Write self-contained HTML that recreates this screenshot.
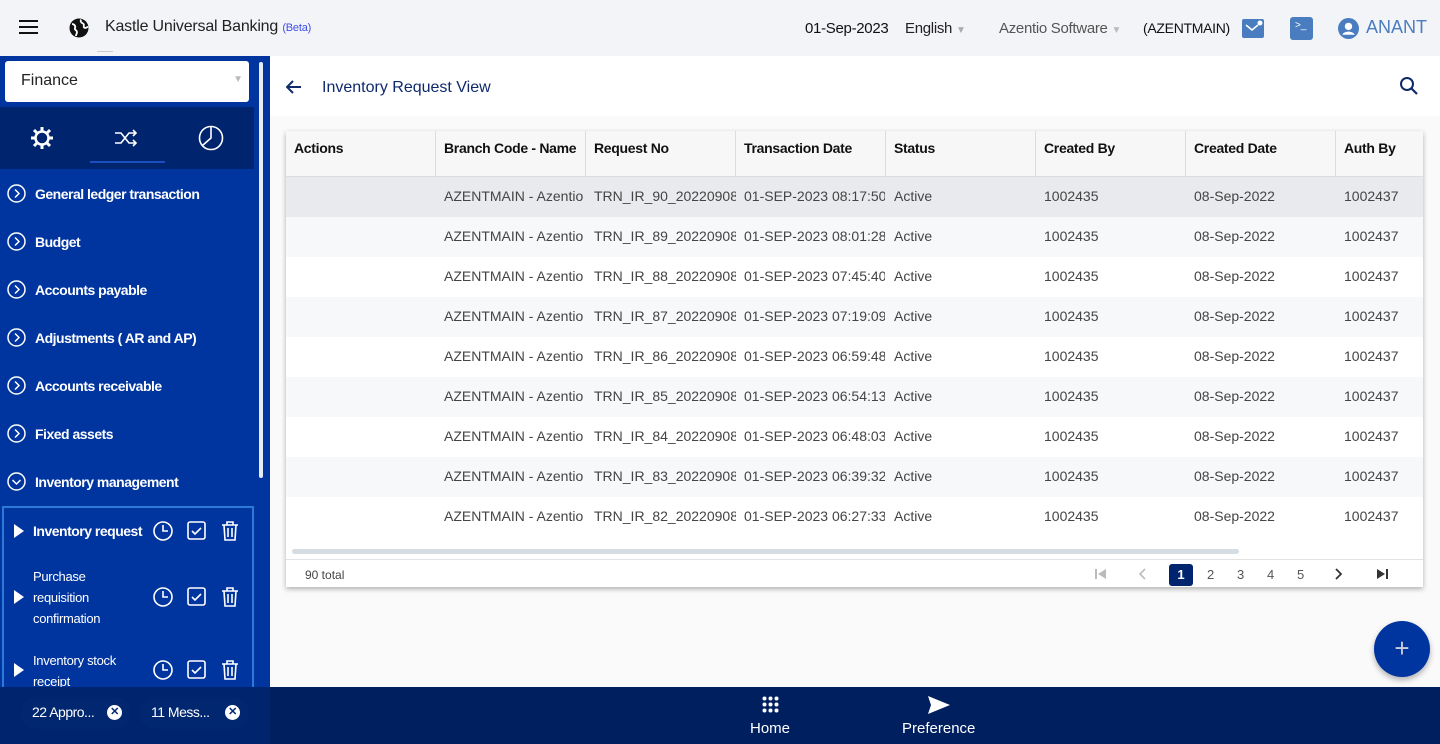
<!DOCTYPE html>
<html><head><meta charset="utf-8"><style>
*{box-sizing:border-box;margin:0;padding:0}
body{width:1440px;height:744px;overflow:hidden;font-family:"Liberation Sans",sans-serif;background:#fafafa;position:relative}
.top{position:absolute;left:0;top:0;width:1440px;height:56px;background:#f3f4f8}
.abs{position:absolute;white-space:nowrap}
.side{position:absolute;left:0;top:56px;width:270px;height:688px;background:#0035a0}
.menu{position:absolute;left:7px;width:240px;height:20px;color:#fff;font-size:14px;font-weight:bold;letter-spacing:-0.5px;white-space:nowrap}
.menu svg{position:absolute;left:0;top:-2px}
.menu span{position:absolute;left:28px;top:0}
.card{position:absolute;left:286px;top:131px;width:1137px;height:456px;background:#fff;box-shadow:0 2px 5px rgba(0,0,0,.3);overflow:hidden}
.th{position:absolute;top:0;height:46px;background:#f7f7f8;border-right:1px solid #ddd;border-bottom:1px solid #ddd;font-size:14px;font-weight:bold;color:#111;padding:9px 8px;letter-spacing:-0.3px}
.row{position:absolute;left:0;width:1137px;height:40px;font-size:14px;color:#444}
.row div{position:absolute;top:11px;overflow:hidden;white-space:nowrap}
.bottom{position:absolute;left:270px;top:687px;width:1170px;height:57px;background:#001f5f}
.chip{position:absolute;top:697px;height:32px;border-radius:16px;background:#00276f;color:#fff;font-size:14px;padding:7px 12px;letter-spacing:-0.5px}
.x{position:absolute;top:8px;width:15px;height:15px;border-radius:50%;background:#fff;color:#00276f;font-size:11px;text-align:center;line-height:15px;font-weight:bold}
.pg{position:absolute;top:433px;font-size:13px;color:#555}
</style></head><body>
<div class="top"></div>
<div class="abs" style="left:19px;top:20px;width:19px;height:2px;background:#111;box-shadow:0 6px #111,0 12px #111"></div>
<svg class="abs" style="left:69px;top:18px" width="20" height="20" viewBox="0 0 20 20"><circle cx="10" cy="10" r="9.5" fill="#111"/><path d="M3 6c2 0 4 2 3 4s2 2 2 4-1 2-1 4M12 1.5c-1 2 0 3 2 4s0 3 1 4 3 0 4-1" stroke="#fff" stroke-width="1.8" fill="none"/></svg>
<div class="abs" style="left:105px;top:18px;font-size:16px;color:#222;letter-spacing:-0.2px">Kastle Universal Banking <span style="font-size:11px;color:#3d4ee6">(Beta)</span></div>
<div class="abs" style="left:97px;top:51px;width:16px;height:1px;background:#ccc"></div>
<div class="abs" style="left:805px;top:20px;font-size:15px;color:#111;letter-spacing:-0.3px">01-Sep-2023</div>
<div class="abs" style="left:905px;top:20px;font-size:15px;color:#222;letter-spacing:-0.3px">English <span style="color:#aaa;font-size:10px">▼</span></div>
<div class="abs" style="left:999px;top:20px;font-size:15px;color:#555;letter-spacing:-0.3px">Azentio Software <span style="color:#bbb;font-size:10px">▼</span></div>
<div class="abs" style="left:1143px;top:20px;font-size:14px;color:#111;letter-spacing:-0.3px">(AZENTMAIN)</div>
<div class="abs" style="left:1242px;top:19px;width:22px;height:19px;background:#4a7dbf;border-radius:2px"><svg width="22" height="19"><path d="M4 6l6 5 6-5" stroke="#fff" stroke-width="1.5" fill="none"/><circle cx="18" cy="4" r="2.5" fill="#fff"/></svg></div>
<div class="abs" style="left:1290px;top:17px;width:23px;height:23px;background:#4a7dbf;border-radius:3px;color:#fff;font-size:10px;padding:3px 5px">&gt;_</div>
<svg class="abs" style="left:1338px;top:18px" width="21" height="21" viewBox="0 0 20 20"><circle cx="10" cy="10" r="10" fill="#4a7dbf"/><circle cx="10" cy="8" r="3.5" fill="#fff"/><path d="M4 16c2-4 10-4 12 0" fill="#fff"/></svg>
<div class="abs" style="left:1366px;top:17px;font-size:18px;color:#4a7dbf">ANANT</div>

<div class="side"></div>
<div class="abs" style="left:259px;top:62px;width:4px;height:416px;background:#fff;border-radius:2px;opacity:.9"></div>
<div class="abs" style="left:5px;top:61px;width:244px;height:41px;background:#fff;border-radius:3px;font-size:16px;color:#222;padding:11px 16px">Finance<span style="position:absolute;right:6px;top:13px;color:#bbb;font-size:10px">▼</span></div>
<div class="abs" style="left:0;top:107px;width:254px;height:62px;background:#00256e"></div>
<svg class="abs" style="left:30px;top:126px" width="24" height="24" viewBox="0 0 24 24"><circle cx="12" cy="12" r="6.5" stroke="#fff" stroke-width="2.5" fill="none"/><path d="M12 1v5M12 18v5M1 12h5M18 12h5M4 4l3.5 3.5M16.5 16.5L20 20M4 20l3.5-3.5M16.5 7.5L20 4" stroke="#fff" stroke-width="3"/></svg>
<svg class="abs" style="left:114px;top:128px" width="25" height="20" viewBox="0 0 25 20"><path d="M1 5h6l8 10h7M1 15h6l8-10h7M19 2l3 3-3 3M19 12l3 3-3 3" stroke="#fff" stroke-width="1.6" fill="none"/></svg>
<div class="abs" style="left:90px;top:161px;width:75px;height:2px;background:#1a4fc0"></div>
<svg class="abs" style="left:198px;top:125px" width="26" height="26" viewBox="0 0 26 26"><circle cx="13" cy="13" r="11.5" stroke="#fff" stroke-width="1.6" fill="none"/><path d="M13 1.5V13L4.5 20.5" stroke="#fff" stroke-width="1.6" fill="none"/></svg>

<div class="menu" style="top:186px"><svg width="19" height="19"><circle cx="9.5" cy="9.5" r="8.5" stroke="#fff" stroke-width="1.5" fill="none"/><path d="M8 5.5l4 4-4 4" stroke="#fff" stroke-width="1.5" fill="none"/></svg><span>General ledger transaction</span></div>
<div class="menu" style="top:234px"><svg width="19" height="19"><circle cx="9.5" cy="9.5" r="8.5" stroke="#fff" stroke-width="1.5" fill="none"/><path d="M8 5.5l4 4-4 4" stroke="#fff" stroke-width="1.5" fill="none"/></svg><span>Budget</span></div>
<div class="menu" style="top:282px"><svg width="19" height="19"><circle cx="9.5" cy="9.5" r="8.5" stroke="#fff" stroke-width="1.5" fill="none"/><path d="M8 5.5l4 4-4 4" stroke="#fff" stroke-width="1.5" fill="none"/></svg><span>Accounts payable</span></div>
<div class="menu" style="top:330px"><svg width="19" height="19"><circle cx="9.5" cy="9.5" r="8.5" stroke="#fff" stroke-width="1.5" fill="none"/><path d="M8 5.5l4 4-4 4" stroke="#fff" stroke-width="1.5" fill="none"/></svg><span>Adjustments ( AR and AP)</span></div>
<div class="menu" style="top:378px"><svg width="19" height="19"><circle cx="9.5" cy="9.5" r="8.5" stroke="#fff" stroke-width="1.5" fill="none"/><path d="M8 5.5l4 4-4 4" stroke="#fff" stroke-width="1.5" fill="none"/></svg><span>Accounts receivable</span></div>
<div class="menu" style="top:426px"><svg width="19" height="19"><circle cx="9.5" cy="9.5" r="8.5" stroke="#fff" stroke-width="1.5" fill="none"/><path d="M8 5.5l4 4-4 4" stroke="#fff" stroke-width="1.5" fill="none"/></svg><span>Fixed assets</span></div>
<div class="menu" style="top:474px"><svg width="19" height="19"><circle cx="9.5" cy="9.5" r="8.5" stroke="#fff" stroke-width="1.5" fill="none"/><path d="M5.5 8l4 4 4-4" stroke="#fff" stroke-width="1.5" fill="none"/></svg><span>Inventory management</span></div>

<div class="abs" style="left:2px;top:506px;width:252px;height:190px;border:2px solid #2b7ad8;border-bottom:none"></div>
<div class="abs" style="left:14px;top:524px;border-left:10px solid #fff;border-top:7px solid transparent;border-bottom:7px solid transparent"></div>
<div class="abs" style="left:33px;top:523px;color:#fff;font-size:14px;font-weight:bold;letter-spacing:-0.5px">Inventory request</div>
<div class="abs" style="left:14px;top:590px;border-left:10px solid #fff;border-top:7px solid transparent;border-bottom:7px solid transparent"></div>
<div class="abs" style="left:33px;top:566px;color:#fff;font-size:13px;line-height:21px;letter-spacing:-0.3px;white-space:normal">Purchase<br>requisition<br>confirmation</div>
<div class="abs" style="left:14px;top:663px;border-left:10px solid #fff;border-top:7px solid transparent;border-bottom:7px solid transparent"></div>
<div class="abs" style="left:33px;top:650px;color:#fff;font-size:13px;line-height:21px;letter-spacing:-0.3px">Inventory stock<br>receipt</div>
<svg class="abs" style="left:152px;top:520px" width="90" height="170">
<g id="ic" stroke="#fff" stroke-width="1.6" fill="none">
<circle cx="11" cy="11" r="9"/><path d="M11 5v6h5"/>
<rect x="36" y="2" width="17" height="17" rx="2"/><path d="M40 11l3 3 6-6"/>
<path d="M70 5h16M75 5V2h6v3M72 5l1 15h10l1-15M76 8v9M80 8v9"/>
</g>
<use href="#ic" y="66"/><use href="#ic" y="139"/>
</svg>
<div class="abs" style="left:0;top:687px;width:270px;height:57px;background:#00256e"></div>
<div class="chip" style="left:20px;width:111px">22 Appro...<div class="x" style="left:87px">✕</div></div>
<div class="chip" style="left:139px;width:110px">11 Mess...<div class="x" style="left:86px">✕</div></div>

<div class="abs" style="left:270px;top:56px;width:1170px;height:60px;background:#fff"></div>
<svg class="abs" style="left:286px;top:80px" width="16" height="14"><path d="M15 7H2M7 1L1 7l6 6" stroke="#0f2a6b" stroke-width="2" fill="none"/></svg>
<div class="abs" style="left:322px;top:79px;font-size:16px;color:#0f2a6b">Inventory Request View</div>
<svg class="abs" style="left:1399px;top:76px" width="20" height="20"><circle cx="8" cy="8" r="6" stroke="#0f2a6b" stroke-width="2" fill="none"/><path d="M12.5 12.5L18 18" stroke="#0f2a6b" stroke-width="2.2"/></svg>

<div class="card">
<div class="th" style="left:0;width:150px">Actions</div>
<div class="th" style="left:150px;width:150px">Branch Code - Name</div>
<div class="th" style="left:300px;width:150px">Request No</div>
<div class="th" style="left:450px;width:150px">Transaction Date</div>
<div class="th" style="left:600px;width:150px">Status</div>
<div class="th" style="left:750px;width:150px">Created By</div>
<div class="th" style="left:900px;width:150px">Created Date</div>
<div class="th" style="left:1050px;width:150px">Auth By</div>
<div class="row" style="top:46px;background:#e8eaed"><div style="left:158px;width:141px">AZENTMAIN - Azentio Main</div><div style="left:308px;width:142px">TRN_IR_90_20220908123</div><div style="left:458px;width:141px">01-SEP-2023 08:17:50</div><div style="left:608px">Active</div><div style="left:758px">1002435</div><div style="left:908px">08-Sep-2022</div><div style="left:1058px">1002437</div></div>
<div class="row" style="top:86px;background:#f7f8fa"><div style="left:158px;width:141px">AZENTMAIN - Azentio Main</div><div style="left:308px;width:142px">TRN_IR_89_20220908123</div><div style="left:458px;width:141px">01-SEP-2023 08:01:28</div><div style="left:608px">Active</div><div style="left:758px">1002435</div><div style="left:908px">08-Sep-2022</div><div style="left:1058px">1002437</div></div>
<div class="row" style="top:126px;background:#fff"><div style="left:158px;width:141px">AZENTMAIN - Azentio Main</div><div style="left:308px;width:142px">TRN_IR_88_20220908123</div><div style="left:458px;width:141px">01-SEP-2023 07:45:40</div><div style="left:608px">Active</div><div style="left:758px">1002435</div><div style="left:908px">08-Sep-2022</div><div style="left:1058px">1002437</div></div>
<div class="row" style="top:166px;background:#f7f8fa"><div style="left:158px;width:141px">AZENTMAIN - Azentio Main</div><div style="left:308px;width:142px">TRN_IR_87_20220908123</div><div style="left:458px;width:141px">01-SEP-2023 07:19:09</div><div style="left:608px">Active</div><div style="left:758px">1002435</div><div style="left:908px">08-Sep-2022</div><div style="left:1058px">1002437</div></div>
<div class="row" style="top:206px;background:#fff"><div style="left:158px;width:141px">AZENTMAIN - Azentio Main</div><div style="left:308px;width:142px">TRN_IR_86_20220908123</div><div style="left:458px;width:141px">01-SEP-2023 06:59:48</div><div style="left:608px">Active</div><div style="left:758px">1002435</div><div style="left:908px">08-Sep-2022</div><div style="left:1058px">1002437</div></div>
<div class="row" style="top:246px;background:#f7f8fa"><div style="left:158px;width:141px">AZENTMAIN - Azentio Main</div><div style="left:308px;width:142px">TRN_IR_85_20220908123</div><div style="left:458px;width:141px">01-SEP-2023 06:54:13</div><div style="left:608px">Active</div><div style="left:758px">1002435</div><div style="left:908px">08-Sep-2022</div><div style="left:1058px">1002437</div></div>
<div class="row" style="top:286px;background:#fff"><div style="left:158px;width:141px">AZENTMAIN - Azentio Main</div><div style="left:308px;width:142px">TRN_IR_84_20220908123</div><div style="left:458px;width:141px">01-SEP-2023 06:48:03</div><div style="left:608px">Active</div><div style="left:758px">1002435</div><div style="left:908px">08-Sep-2022</div><div style="left:1058px">1002437</div></div>
<div class="row" style="top:326px;background:#f7f8fa"><div style="left:158px;width:141px">AZENTMAIN - Azentio Main</div><div style="left:308px;width:142px">TRN_IR_83_20220908123</div><div style="left:458px;width:141px">01-SEP-2023 06:39:32</div><div style="left:608px">Active</div><div style="left:758px">1002435</div><div style="left:908px">08-Sep-2022</div><div style="left:1058px">1002437</div></div>
<div class="row" style="top:366px;background:#fff"><div style="left:158px;width:141px">AZENTMAIN - Azentio Main</div><div style="left:308px;width:142px">TRN_IR_82_20220908123</div><div style="left:458px;width:141px">01-SEP-2023 06:27:33</div><div style="left:608px">Active</div><div style="left:758px">1002435</div><div style="left:908px">08-Sep-2022</div><div style="left:1058px">1002437</div></div>
<div class="abs" style="left:6px;top:418px;width:947px;height:5px;background:#d5dde2;border-radius:3px"></div>
<div class="abs" style="left:0;top:428px;width:1137px;height:1px;background:#e2e2e2"></div>
<div class="pg" style="left:19px;top:437px;font-size:12px;color:#444">90 total</div>
<svg class="abs" style="left:809px;top:437px" width="12" height="12"><path d="M1 1v10" stroke="#bbb" stroke-width="2"/><path d="M11 1L3 6l8 5z" fill="#bbb"/></svg>
<svg class="abs" style="left:853px;top:437px" width="8" height="12"><path d="M6 1L1 6l5 5" stroke="#bbb" stroke-width="1.6" fill="none"/></svg>
<div class="abs" style="left:883px;top:433px;width:24px;height:22px;background:#00256e;border-radius:3px;color:#fff;font-size:13px;font-weight:bold;text-align:center;line-height:22px">1</div>
<div class="pg" style="left:921px;top:436px">2</div>
<div class="pg" style="left:951px;top:436px">3</div>
<div class="pg" style="left:981px;top:436px">4</div>
<div class="pg" style="left:1011px;top:436px">5</div>
<svg class="abs" style="left:1048px;top:437px" width="8" height="12"><path d="M2 1l5 5-5 5" stroke="#333" stroke-width="1.8" fill="none"/></svg>
<svg class="abs" style="left:1090px;top:437px" width="12" height="12"><path d="M1 1l8 5-8 5z" fill="#333"/><path d="M11 1v10" stroke="#333" stroke-width="2"/></svg>
</div>

<div class="abs" style="left:1374px;top:621px;width:56px;height:56px;border-radius:50%;background:#0035a0;box-shadow:0 3px 6px rgba(0,0,0,.3);color:#ccd;font-size:26px;text-align:center;line-height:54px;font-weight:300">+</div>

<div class="bottom"></div>
<svg class="abs" style="left:762px;top:696px" width="17" height="17"><g fill="#fff"><circle cx="2.5" cy="2.5" r="2"/><circle cx="8.5" cy="2.5" r="2"/><circle cx="14.5" cy="2.5" r="2"/><circle cx="2.5" cy="8.5" r="2"/><circle cx="8.5" cy="8.5" r="2"/><circle cx="14.5" cy="8.5" r="2"/><circle cx="2.5" cy="14.5" r="2"/><circle cx="8.5" cy="14.5" r="2"/><circle cx="14.5" cy="14.5" r="2"/></g></svg>
<div class="abs" style="left:750px;top:720px;color:#fff;font-size:15px">Home</div>
<svg class="abs" style="left:928px;top:696px" width="22" height="18"><path d="M0 0L22 9 0 18 3 9z" fill="#fff"/></svg>
<div class="abs" style="left:902px;top:720px;color:#fff;font-size:15px">Preference</div>
</body></html>
